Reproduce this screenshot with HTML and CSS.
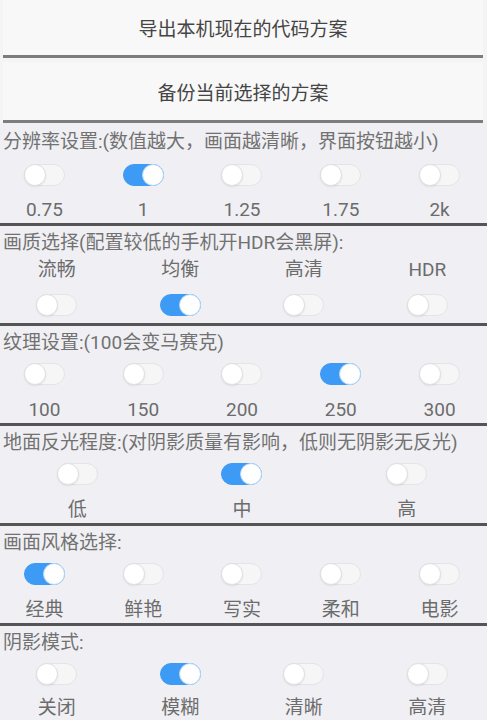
FILE: index.html
```html
<!DOCTYPE html>
<html lang="zh-CN">
<head>
<meta charset="utf-8">
<title>画质设置</title>
<link rel="stylesheet" href="styles.css">
</head>
<body>
<div class="page">
  <div class="actions">
    <div class="btn btn-first">导出本机现在的代码方案</div>
    <div class="btn btn-second">备份当前选择的方案</div>
  </div>

  <section class="sec sec-first">
    <div class="head">分辨率设置:(数值越大，画面越清晰，界面按钮越小)</div>
    <div class="row cols5 toggles toggles-first">
      <div class="cell"><span class="sw"><span class="knob"></span></span></div>
      <div class="cell"><span class="sw on"><span class="knob"></span></span></div>
      <div class="cell"><span class="sw"><span class="knob"></span></span></div>
      <div class="cell"><span class="sw"><span class="knob"></span></span></div>
      <div class="cell"><span class="sw"><span class="knob"></span></span></div>
    </div>
    <div class="row cols5 labels labels-first">
      <div class="cell">0.75</div>
      <div class="cell">1</div>
      <div class="cell">1.25</div>
      <div class="cell">1.75</div>
      <div class="cell">2k</div>
    </div>
  </section>

  <section class="sec">
    <div class="head">画质选择(配置较低的手机开HDR会黑屏):</div>
    <div class="row cols4 labels labels-top">
      <div class="cell">流畅</div>
      <div class="cell">均衡</div>
      <div class="cell">高清</div>
      <div class="cell">HDR</div>
    </div>
    <div class="row cols4 toggles toggles-bottom">
      <div class="cell"><span class="sw"><span class="knob"></span></span></div>
      <div class="cell"><span class="sw on"><span class="knob"></span></span></div>
      <div class="cell"><span class="sw"><span class="knob"></span></span></div>
      <div class="cell"><span class="sw"><span class="knob"></span></span></div>
    </div>
  </section>

  <section class="sec">
    <div class="head">纹理设置:(100会变马赛克)</div>
    <div class="row cols5 toggles">
      <div class="cell"><span class="sw"><span class="knob"></span></span></div>
      <div class="cell"><span class="sw"><span class="knob"></span></span></div>
      <div class="cell"><span class="sw"><span class="knob"></span></span></div>
      <div class="cell"><span class="sw on"><span class="knob"></span></span></div>
      <div class="cell"><span class="sw"><span class="knob"></span></span></div>
    </div>
    <div class="row cols5 labels">
      <div class="cell">100</div>
      <div class="cell">150</div>
      <div class="cell">200</div>
      <div class="cell">250</div>
      <div class="cell">300</div>
    </div>
  </section>

  <section class="sec">
    <div class="head">地面反光程度:(对阴影质量有影响，低则无阴影无反光)</div>
    <div class="row cols3 toggles">
      <div class="cell"><span class="sw"><span class="knob"></span></span></div>
      <div class="cell"><span class="sw on"><span class="knob"></span></span></div>
      <div class="cell"><span class="sw"><span class="knob"></span></span></div>
    </div>
    <div class="row cols3 labels">
      <div class="cell">低</div>
      <div class="cell">中</div>
      <div class="cell">高</div>
    </div>
  </section>

  <section class="sec">
    <div class="head">画面风格选择:</div>
    <div class="row cols5 toggles">
      <div class="cell"><span class="sw on"><span class="knob"></span></span></div>
      <div class="cell"><span class="sw"><span class="knob"></span></span></div>
      <div class="cell"><span class="sw"><span class="knob"></span></span></div>
      <div class="cell"><span class="sw"><span class="knob"></span></span></div>
      <div class="cell"><span class="sw"><span class="knob"></span></span></div>
    </div>
    <div class="row cols5 labels">
      <div class="cell">经典</div>
      <div class="cell">鲜艳</div>
      <div class="cell">写实</div>
      <div class="cell">柔和</div>
      <div class="cell">电影</div>
    </div>
  </section>

  <section class="sec sec-last">
    <div class="head">阴影模式:</div>
    <div class="row cols4 toggles">
      <div class="cell"><span class="sw"><span class="knob"></span></span></div>
      <div class="cell"><span class="sw on"><span class="knob"></span></span></div>
      <div class="cell"><span class="sw"><span class="knob"></span></span></div>
      <div class="cell"><span class="sw"><span class="knob"></span></span></div>
    </div>
    <div class="row cols4 labels labels-last">
      <div class="cell">关闭</div>
      <div class="cell">模糊</div>
      <div class="cell">清晰</div>
      <div class="cell">高清</div>
    </div>
  </section>
</div>
</body>
</html>
```

FILE: styles.css
```css
html, body {
  margin: 0;
  padding: 0;
}

body {
  width: 487px;
  height: 720px;
  overflow: hidden;
  background: #f0f0f4;
  font-family: Roboto, "Noto Sans CJK SC", sans-serif;
  color: #707070;
}

.page {
  display: flex;
  flex-direction: column;
  width: 487px;
  overflow: hidden;
}

.actions {
  display: flex;
  flex-direction: column;
  background: #f4f4f4;
}

.btn {
  margin: 0 4px 0 3px;
  background: #f8f8f8;
  border-bottom: 3px solid #7c7c7c;
  display: flex;
  align-items: center;
  justify-content: center;
  font-size: 19px;
  color: #454545;
  font-family: "Noto Sans CJK SC", sans-serif;
}

.btn-first {
  height: 55px;
}

.btn-second {
  height: 58px;
  margin-top: 4px;
}

.sec {
  display: flex;
  flex-direction: column;
  height: 97px;
  border-bottom: 3px solid #555555;
  background: #f0f0f4;
}

.sec-first {
  height: 98px;
  padding-top: 2px;
}

.sec-last {
  border-bottom: none;
}

.head {
  padding: 4px 0 0 3px;
  height: 26px;
  line-height: 26px;
  font-size: 19px;
  color: #727272;
  white-space: nowrap;
}

.row {
  display: grid;
  margin: 0 -2px 0 -5px;
}

.cols5 {
  grid-template-columns: repeat(5, 1fr);
}

.cols4 {
  grid-template-columns: repeat(4, 1fr);
}

.cols3 {
  grid-template-columns: repeat(3, 1fr);
}

.cell {
  display: flex;
  align-items: center;
  justify-content: center;
}

.toggles {
  height: 36px;
}

.toggles-first {
  margin-top: 2px;
}

.toggles-bottom {
  margin-top: 4px;
}

.labels {
  margin-top: 5px;
  height: 26px;
  line-height: 26px;
  font-size: 19px;
  color: #6c6c6c;
}

.labels-first {
  margin-top: 4px;
}

.labels-top {
  margin-top: 1px;
}

.labels-last {
  margin-top: 3px;
}

.sw {
  box-sizing: border-box;
  width: 41px;
  height: 22px;
  border-radius: 11px;
  background: #f6f6f6;
  border: 1px solid #e4e4e6;
  display: flex;
  align-items: center;
  justify-content: flex-start;
}

.sw .knob {
  box-sizing: border-box;
  width: 22px;
  height: 22px;
  margin: -1px;
  border-radius: 50%;
  background: #ffffff;
  border: 1px solid #e0e0e2;
  box-shadow: 0 1px 2px rgba(0, 0, 0, 0.08);
}

.sw.on {
  background: #3d9bf5;
  border-color: #3d9bf5;
  justify-content: flex-end;
}

.sw.on .knob {
  border-color: #b7d6f6;
  box-shadow: none;
}
```
